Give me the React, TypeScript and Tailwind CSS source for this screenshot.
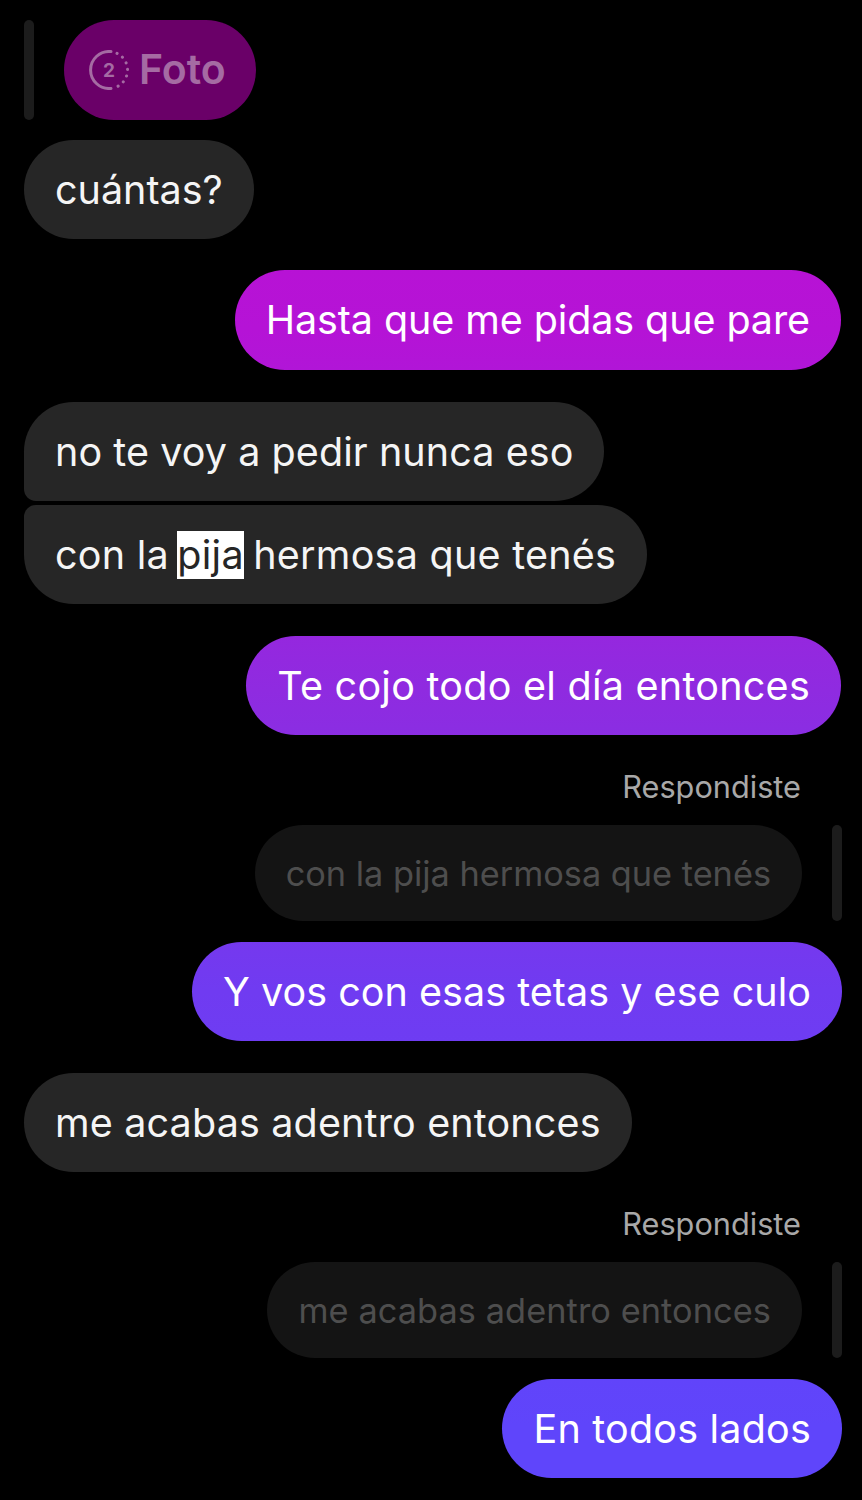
import type { ReactNode } from "react";

// Bubble colours come from one page-wide gradient, like the real thread
const outgoing =
  "bg-fixed bg-[linear-gradient(180deg,#c10fd0_0%,#b513d6_22%,#8f2be0_46%,#703bf1_66%,#5f45fb_95%)]";

function Bubble({
  side = "in",
  corners = "rounded-[50px]",
  height = "h-[99px]",
  extra = "",
  children,
}: {
  side?: "in" | "out";
  corners?: string;
  height?: string;
  extra?: string;
  children: ReactNode;
}) {
  return (
    <div
      className={`flex w-fit items-center px-[31px] pt-0.5 text-[39.5px] ${height} ${corners} ${extra} ${
        side === "out"
          ? `self-end text-white ${outgoing}`
          : "self-start bg-[#262626] text-[#f5f5f5]"
      }`}
    >
      <span className="whitespace-nowrap">{children}</span>
    </div>
  );
}

// Quoted message above a reply, with its side bar
function ReplyQuote({ text, extra = "" }: { text: string; extra?: string }) {
  return (
    <div className="mt-8 flex flex-col items-end">
      <div className="mr-[41px] flex h-10 items-center text-[30.7px] text-[#a8a8a8]">
        Respondiste
      </div>
      <div className="mt-[18px] flex h-24 items-stretch gap-[30px]">
        <div className={`flex items-center rounded-[48px] bg-[#141414] px-[31px] pt-0.5 text-[34.3px] text-[#4e4e4e] ${extra}`}>
          <span className="whitespace-nowrap">{text}</span>
        </div>
        <div className="w-2.5 rounded-md bg-[#1c1c1c]" />
      </div>
    </div>
  );
}

function ViewOnceIcon() {
  return (
    <svg viewBox="0 0 40 40" className="h-10 w-10" fill="none" stroke="#a56ba3" strokeLinecap="round">
      <path d="M22 1.6a18.5 18.5 0 1 0 0 36.8" strokeWidth="3" />
      <path d="M28 3.3a18.5 18.5 0 0 1 0 33.4" strokeWidth="3" strokeDasharray="0.1 6.6" />
      <text x="20" y="27" textAnchor="middle" fontSize="19" fontWeight="700" fill="#a56ba3" stroke="none">
        2
      </text>
    </svg>
  );
}

export default function App() {
  return (
    <div className="flex h-[1500px] w-[862px] flex-col overflow-hidden bg-black pl-6 pr-5 pt-5 font-['Inter',sans-serif]">
      <div className="flex h-[100px] items-stretch gap-[30px]">
        <div className="w-2.5 rounded-md bg-[#1c1c1c]" />
        <div className="flex items-center gap-2.5 rounded-[50px] bg-[#6a0068] pl-[25px] pr-[30px] text-[41px] font-semibold text-[#a56ba3]">
          <ViewOnceIcon />
          Foto
        </div>
      </div>

      <div className="mt-5 flex flex-col">
        <Bubble>cuántas?</Bubble>
      </div>

      <div className="mt-[31px] flex flex-col">
        <Bubble side="out" height="h-[100px]" extra="mr-px tracking-[-0.1px]">
          Hasta que me pidas que pare
        </Bubble>
      </div>

      <div className="mt-8 flex flex-col gap-1">
        <Bubble corners="rounded-[50px] rounded-bl-xl" extra="tracking-[0.07px]">
          no te voy a pedir nunca eso
        </Bubble>
        <Bubble corners="rounded-[50px] rounded-tl-xl" extra="tracking-[0.25px]">
          con la <span className="-ml-[3px] -mr-[2px] bg-white text-[#262626]">pija</span> hermosa que tenés
        </Bubble>
      </div>

      <div className="mt-8 flex flex-col">
        <Bubble side="out" extra="mr-px tracking-[0.26px]">
          Te cojo todo el día entonces
        </Bubble>
      </div>

      <ReplyQuote text="con la pija hermosa que tenés" />

      <div className="mt-[21px] flex flex-col">
        <Bubble side="out" extra="tracking-[0.03px]">
          Y vos con esas tetas y ese culo
        </Bubble>
      </div>

      <div className="mt-8 flex flex-col">
        <Bubble extra="tracking-[0.15px]">me acabas adentro entonces</Bubble>
      </div>

      <ReplyQuote text="me acabas adentro entonces" extra="tracking-[0.08px]" />

      <div className="mt-[21px] flex flex-col">
        <Bubble side="out" extra="tracking-[0.2px]">
          En todos lados
        </Bubble>
      </div>
    </div>
  );
}
